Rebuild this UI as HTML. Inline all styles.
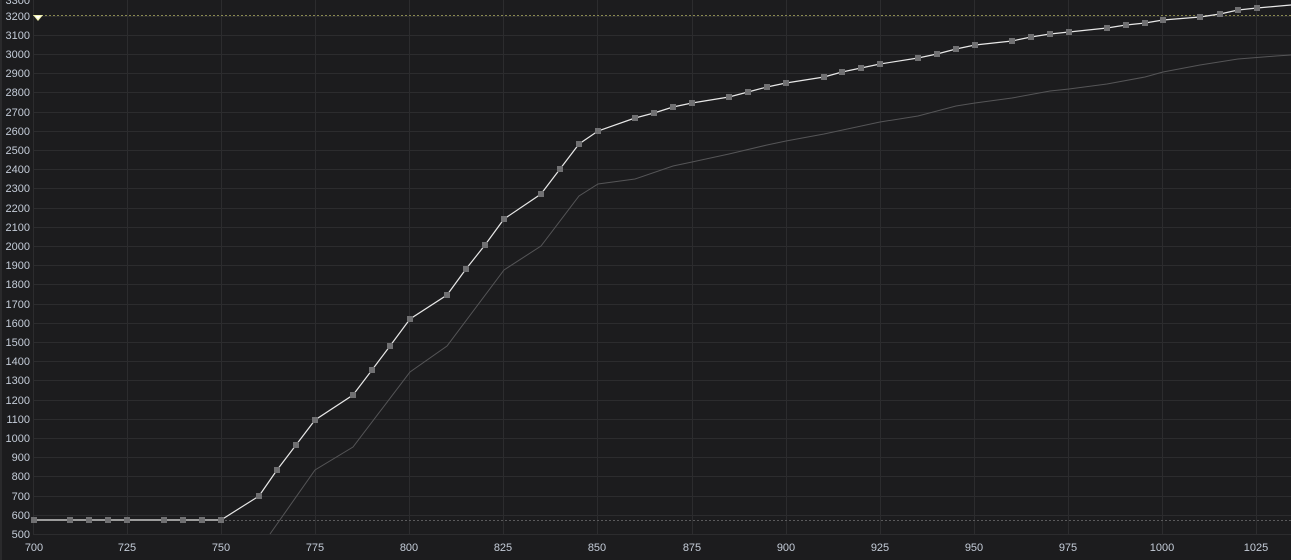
<!DOCTYPE html>
<html><head><meta charset="utf-8"><style>
html,body{margin:0;padding:0;background:#1c1c1e;width:1291px;height:560px;overflow:hidden}
svg{display:block}
text{font-family:"Liberation Sans",sans-serif;font-size:11px;fill:#c4ccd8}
</style></head><body>
<svg width="1291" height="560" viewBox="0 0 1291 560">
<rect x="0" y="0" width="1291" height="560" fill="#1c1c1e"/>
<rect x="0" y="0" width="2" height="560" fill="#2a2a2c"/>
<g stroke="#2c2c2e" stroke-width="1">
<line x1="33.5" y1="0" x2="33.5" y2="534"/>
<line x1="127.5" y1="0" x2="127.5" y2="534"/><line x1="221.5" y1="0" x2="221.5" y2="534"/>
<line x1="315.5" y1="0" x2="315.5" y2="534"/><line x1="409.5" y1="0" x2="409.5" y2="534"/>
<line x1="503.5" y1="0" x2="503.5" y2="534"/><line x1="597.5" y1="0" x2="597.5" y2="534"/>
<line x1="692.5" y1="0" x2="692.5" y2="534"/><line x1="786.5" y1="0" x2="786.5" y2="534"/>
<line x1="880.5" y1="0" x2="880.5" y2="534"/><line x1="974.5" y1="0" x2="974.5" y2="534"/>
<line x1="1068.5" y1="0" x2="1068.5" y2="534"/><line x1="1162.5" y1="0" x2="1162.5" y2="534"/>
<line x1="1256.5" y1="0" x2="1256.5" y2="534"/>
<line x1="33" y1="534.5" x2="1291" y2="534.5"/><line x1="33" y1="515.5" x2="1291" y2="515.5"/>
<line x1="33" y1="496.5" x2="1291" y2="496.5"/><line x1="33" y1="476.5" x2="1291" y2="476.5"/>
<line x1="33" y1="457.5" x2="1291" y2="457.5"/><line x1="33" y1="438.5" x2="1291" y2="438.5"/>
<line x1="33" y1="419.5" x2="1291" y2="419.5"/><line x1="33" y1="400.5" x2="1291" y2="400.5"/>
<line x1="33" y1="380.5" x2="1291" y2="380.5"/><line x1="33" y1="361.5" x2="1291" y2="361.5"/>
<line x1="33" y1="342.5" x2="1291" y2="342.5"/><line x1="33" y1="323.5" x2="1291" y2="323.5"/>
<line x1="33" y1="304.5" x2="1291" y2="304.5"/><line x1="33" y1="284.5" x2="1291" y2="284.5"/>
<line x1="33" y1="265.5" x2="1291" y2="265.5"/><line x1="33" y1="246.5" x2="1291" y2="246.5"/>
<line x1="33" y1="227.5" x2="1291" y2="227.5"/><line x1="33" y1="208.5" x2="1291" y2="208.5"/>
<line x1="33" y1="188.5" x2="1291" y2="188.5"/><line x1="33" y1="169.5" x2="1291" y2="169.5"/>
<line x1="33" y1="150.5" x2="1291" y2="150.5"/><line x1="33" y1="131.5" x2="1291" y2="131.5"/>
<line x1="33" y1="112.5" x2="1291" y2="112.5"/><line x1="33" y1="92.5" x2="1291" y2="92.5"/>
<line x1="33" y1="73.5" x2="1291" y2="73.5"/><line x1="33" y1="54.5" x2="1291" y2="54.5"/>
<line x1="33" y1="35.5" x2="1291" y2="35.5"/><line x1="33" y1="16.5" x2="1291" y2="16.5"/>
</g>
<line x1="33" y1="15.5" x2="1291" y2="15.5" stroke="#8a8a50" stroke-dasharray="2,2"/>
<line x1="221" y1="520.5" x2="1291" y2="520.5" stroke="#5a5a5c" stroke-dasharray="2,2"/>
<polyline fill="none" stroke="#555557" stroke-width="1" points="270,534 315,470 353,447 410,372 447,346 504,270 541,246 579,196 598,184 635,179 673,166 692,162 729,154 767,145 786,141 824,134 880,122 918,116 956,106 975,103 1012,98 1050,91 1069,89 1107,84 1145,77 1163,72 1200,65 1238,59 1276,56 1291,55"/>
<polyline fill="none" stroke="#e8e8e8" stroke-width="1.2" points="34,520 221,520 259,496 277,470 296,445 315,420 353,395 372,370 390,346 410,319 447,295 466,269 485,245 504,219 541,194 560,169 579,144 598,131 635,118 654,113 673,107 692,103 729,97 748,92 767,87 786,83 824,77 842,72 861,68 880,64 918,58 937,54 956,49 975,45 1012,41 1031,37 1050,34 1069,32 1107,28 1126,25 1145,23 1163,20 1200,17 1220,14 1238,10 1257,8 1291,5"/>
<g fill="#707072">
<rect x="31" y="517" width="6" height="6"/><rect x="67" y="517" width="6" height="6"/><rect x="86" y="517" width="6" height="6"/><rect x="105" y="517" width="6" height="6"/><rect x="124" y="517" width="6" height="6"/><rect x="161" y="517" width="6" height="6"/><rect x="180" y="517" width="6" height="6"/><rect x="199" y="517" width="6" height="6"/><rect x="218" y="517" width="6" height="6"/>
<rect x="256" y="493" width="6" height="6"/><rect x="274" y="467" width="6" height="6"/><rect x="293" y="442" width="6" height="6"/><rect x="312" y="417" width="6" height="6"/><rect x="350" y="392" width="6" height="6"/><rect x="369" y="367" width="6" height="6"/><rect x="387" y="343" width="6" height="6"/><rect x="407" y="316" width="6" height="6"/><rect x="444" y="292" width="6" height="6"/><rect x="463" y="266" width="6" height="6"/><rect x="482" y="242" width="6" height="6"/><rect x="501" y="216" width="6" height="6"/><rect x="538" y="191" width="6" height="6"/><rect x="557" y="166" width="6" height="6"/><rect x="576" y="141" width="6" height="6"/><rect x="595" y="128" width="6" height="6"/><rect x="632" y="115" width="6" height="6"/><rect x="651" y="110" width="6" height="6"/><rect x="670" y="104" width="6" height="6"/><rect x="689" y="100" width="6" height="6"/><rect x="726" y="94" width="6" height="6"/><rect x="745" y="89" width="6" height="6"/><rect x="764" y="84" width="6" height="6"/><rect x="783" y="80" width="6" height="6"/><rect x="821" y="74" width="6" height="6"/><rect x="839" y="69" width="6" height="6"/><rect x="858" y="65" width="6" height="6"/><rect x="877" y="61" width="6" height="6"/><rect x="915" y="55" width="6" height="6"/><rect x="934" y="51" width="6" height="6"/><rect x="953" y="46" width="6" height="6"/><rect x="972" y="42" width="6" height="6"/><rect x="1009" y="38" width="6" height="6"/><rect x="1028" y="34" width="6" height="6"/><rect x="1047" y="31" width="6" height="6"/><rect x="1066" y="29" width="6" height="6"/><rect x="1104" y="25" width="6" height="6"/><rect x="1123" y="22" width="6" height="6"/><rect x="1142" y="20" width="6" height="6"/><rect x="1160" y="17" width="6" height="6"/><rect x="1197" y="14" width="6" height="6"/><rect x="1217" y="11" width="6" height="6"/><rect x="1235" y="7" width="6" height="6"/><rect x="1254" y="5" width="6" height="6"/>
</g>
<polygon points="33,15 43,15 38,21" fill="#f0f0b0"/><polygon points="35,16 41,16 38,19" fill="#fff"/>
<g text-anchor="end">
<text x="30" y="4">3300</text>
<text x="30" y="20">3200</text><text x="30" y="39">3100</text><text x="30" y="58">3000</text><text x="30" y="77">2900</text>
<text x="30" y="96">2800</text><text x="30" y="116">2700</text><text x="30" y="135">2600</text><text x="30" y="154">2500</text>
<text x="30" y="173">2400</text><text x="30" y="192">2300</text><text x="30" y="212">2200</text><text x="30" y="231">2100</text>
<text x="30" y="250">2000</text><text x="30" y="269">1900</text><text x="30" y="288">1800</text><text x="30" y="308">1700</text>
<text x="30" y="327">1600</text><text x="30" y="346">1500</text><text x="30" y="365">1400</text><text x="30" y="384">1300</text>
<text x="30" y="404">1200</text><text x="30" y="423">1100</text><text x="30" y="442">1000</text><text x="30" y="461">900</text>
<text x="30" y="480">800</text><text x="30" y="500">700</text><text x="30" y="519">600</text><text x="30" y="538">500</text>
</g>
<g text-anchor="middle">
<text x="34" y="551">700</text><text x="127" y="551">725</text><text x="221" y="551">750</text><text x="315" y="551">775</text>
<text x="409" y="551">800</text><text x="503" y="551">825</text><text x="597" y="551">850</text><text x="692" y="551">875</text>
<text x="786" y="551">900</text><text x="880" y="551">925</text><text x="974" y="551">950</text><text x="1068" y="551">975</text>
<text x="1162" y="551">1000</text><text x="1256" y="551">1025</text>
</g>
</svg>
</body></html>
